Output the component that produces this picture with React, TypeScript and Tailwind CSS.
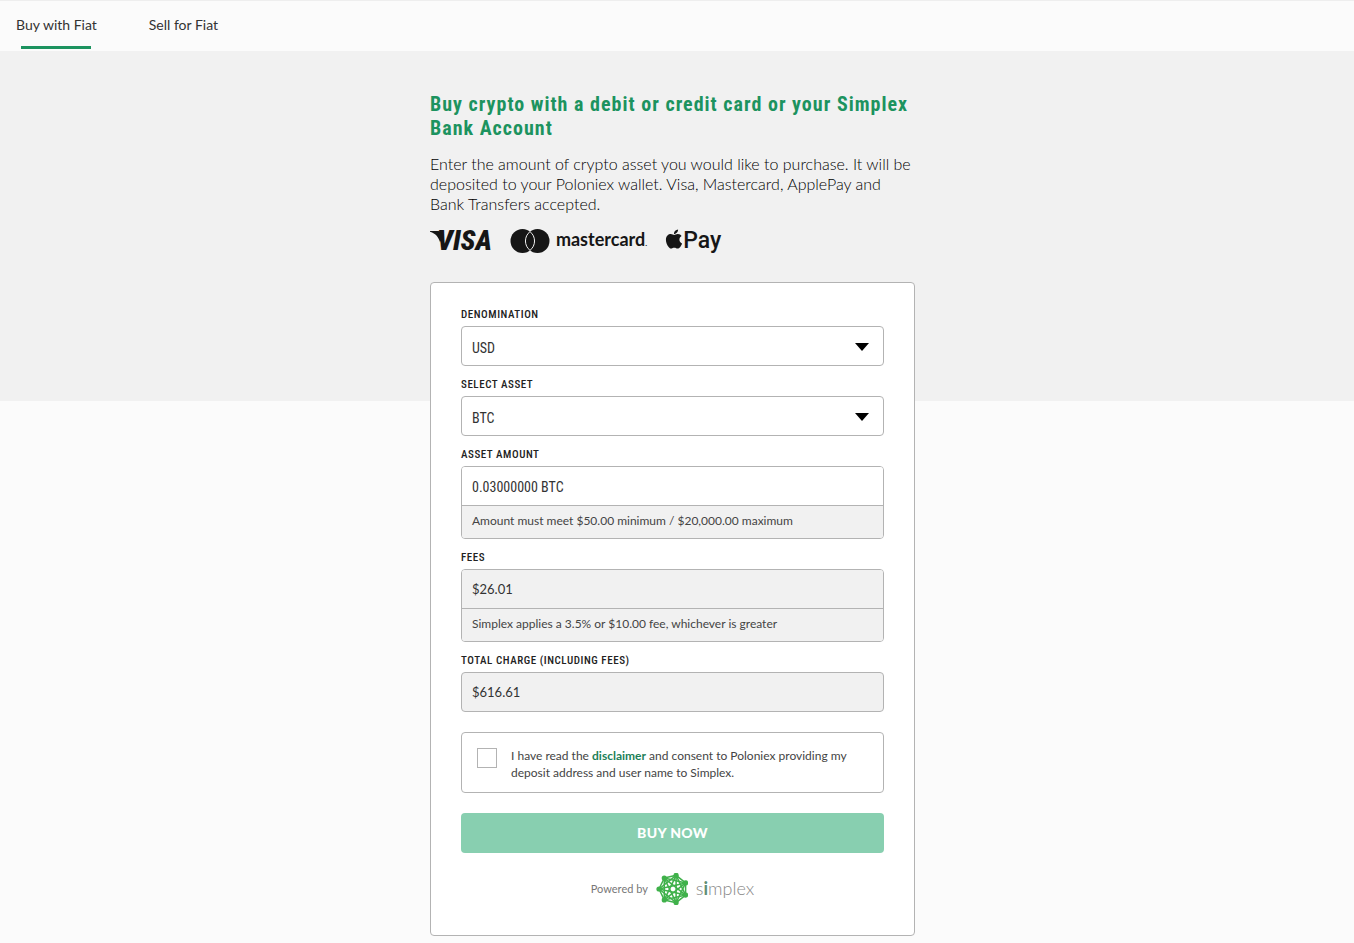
import React, { useState } from 'react';
import { FaApple } from 'react-icons/fa';

const tabs = ['Buy with Fiat', 'Sell for Fiat'];

const labelClass = 'block mt-[11px] mb-[3px] font-["Roboto_Condensed",sans-serif] text-[11px] leading-4 font-medium tracking-wider uppercase text-[#222]';

const VisaLogo = () => (
  <div className='relative pl-[7px] font-["Roboto_Condensed",sans-serif] text-[28px] leading-7 font-black italic'>
    <svg className="absolute left-0 top-1 w-3 h-3" viewBox="0 0 12 12" fill="currentColor">
      <path d="M0 0h8.500c1.500 0 2.300.7 2.600 2L12 8l-2 3C8.500 6.500 6 2.600 0 .8z" />
    </svg>
    VISA
  </div>
);

const MastercardLogo = () => (
  <div className="flex items-center gap-1.5">
    <svg className="w-10 h-6" viewBox="0 0 40 24" fill="currentColor">
      <circle cx="12.500" cy="12" r="12" />
      <circle cx="27.500" cy="12" r="12" />
      <path d="M20 2.600a12 12 0 0 1 0 18.800a12 12 0 0 1 0-18.800z" stroke="#f1f1f1" strokeWidth="1" />
    </svg>
    <span className="font-[Lato,sans-serif] text-lg leading-6 font-bold">
      mastercard<span className="text-[8px]">.</span>
    </span>
  </div>
);

const ApplePayLogo = () => (
  <div className="flex items-center">
    <FaApple className="w-[18px] h-[22px] mb-1" />
    <span className="font-[Roboto,sans-serif] text-[23px] leading-6 font-medium">Pay</span>
  </div>
);

const SimplexMark = () => {
  const nodes = [0, 1, 2, 3, 4, 5, 6].map((i) => {
    const angle = Math.PI + (i * 2 * Math.PI) / 7;
    return { x: 17 + 14 * Math.cos(angle), y: 16 + 14 * Math.sin(angle) };
  });

  return (
    <svg className="w-8 h-8" viewBox="0 0 32 32" fill="#3fb14a" stroke="#3fb14a">
      {nodes.map((a, i) =>
        nodes.slice(i + 1).map((b, j) => (
          <line key={`${i}-${j}`} x1={a.x} y1={a.y} x2={b.x} y2={b.y} strokeWidth="1.500" />
        ))
      )}
      {nodes.map((n, i) => (
        <circle key={i} cx={n.x} cy={n.y} r="2.600" stroke="none" />
      ))}
    </svg>
  );
};

const SelectField = ({ id, label, options }: { id: string; label: string; options: string[] }) => (
  <div>
    <label htmlFor={id} className={labelClass}>{label}</label>
    <div className="relative">
      <select
        id={id}
        className='block w-full h-10 px-2.5 pt-1 appearance-none rounded border border-[#b3b3b3] bg-white font-["Roboto_Condensed",sans-serif] text-sm text-[#333]'
      >
        {options.map((o) => (
          <option key={o}>{o}</option>
        ))}
      </select>
      <svg className="absolute right-[15px] top-[17px] w-3.5 h-2 pointer-events-none" viewBox="0 0 14 8">
        <path d="M0 0h14L7 8z" />
      </svg>
    </div>
  </div>
);

const App = () => {
  const [activeTab, setActiveTab] = useState(0);
  const [amount, setAmount] = useState('0.03000000 BTC');

  return (
    <div className="min-h-screen bg-[#fbfbfb] font-[Lato,sans-serif] text-[#222]">
      <nav className="flex h-[51px] gap-[52px] border-t border-[#eee] px-4">
        {tabs.map((tab, index) => (
          <button
            key={tab}
            onClick={() => setActiveTab(index)}
            className="flex flex-col items-center justify-between pt-3.5 pb-0.5 text-sm text-[#333]"
          >
            {tab}
            <span className={activeTab === index ? 'w-[70px] h-[3px] bg-[#1c935f]' : 'h-[3px]'} />
          </button>
        ))}
      </nav>

      {/* Grey band behind the top of the form */}
      <main className="bg-[linear-gradient(#f1f1f1_350px,transparent_350px)] pt-[41px] pb-[7px] pr-[9px]">
        <div className="w-full max-w-[485px] mx-auto">
          <h1 className='font-["Roboto_Condensed",sans-serif] text-xl leading-6 font-bold tracking-wider text-[#1c935f]'>
            Buy crypto with a debit or credit card or your Simplex Bank Account
          </h1>
          <p className="mt-3.5 text-base leading-5 font-light text-black">
            Enter the amount of crypto asset you would like to purchase. It will be deposited to your Poloniex wallet.
            Visa, Mastercard, ApplePay and Bank Transfers accepted.
          </p>

          <div className="flex items-center gap-[18px] h-7 mt-[13px] text-[#161616]">
            <VisaLogo />
            <MastercardLogo />
            <ApplePayLogo />
          </div>

          {/* Form */}
          <form
            onSubmit={(e) => e.preventDefault()}
            className="mt-[27px] px-[30px] pt-[13px] pb-[30px] flow-root rounded border border-[#b3b3b3] bg-white"
          >
            <SelectField id="denomination" label="Denomination" options={['USD', 'EUR', 'GBP']} />
            <SelectField id="asset" label="Select asset" options={['BTC', 'ETH', 'XRP']} />

            <label htmlFor="amount" className={labelClass}>Asset amount</label>
            <div className="rounded border border-[#b3b3b3] overflow-hidden">
              <input
                id="amount"
                value={amount}
                onChange={(e) => setAmount(e.target.value)}
                className='block w-full h-[38px] px-2.5 pt-0.5 bg-white font-["Roboto_Condensed",sans-serif] text-sm text-[#333]'
              />
              <p className="h-[33px] px-2.5 border-t border-[#b3b3b3] bg-[#f1f1f1] text-xs leading-[30px] text-[#444]">
                Amount must meet $50.00 minimum / $20,000.00 maximum
              </p>
            </div>

            <label htmlFor="fees" className={labelClass}>Fees</label>
            <div className="rounded border border-[#b3b3b3] overflow-hidden">
              <input id="fees" readOnly value="$26.01" className="block w-full h-[38px] px-2.5 bg-[#f1f1f1] text-[13px] text-[#333]" />
              <p className="h-[33px] px-2.5 border-t border-[#b3b3b3] bg-[#f1f1f1] text-xs leading-[30px] text-[#444]">
                Simplex applies a 3.5% or $10.00 fee, whichever is greater
              </p>
            </div>

            <label htmlFor="total" className={labelClass}>Total charge (including fees)</label>
            <input
              id="total"
              readOnly
              value="$616.61"
              className="block w-full h-10 px-2.5 rounded border border-[#b3b3b3] bg-[#f1f1f1] text-[13px] text-[#333]"
            />

            <div className="flex items-start gap-3.5 mt-5 px-[15px] pt-3.5 pb-[11px] rounded border border-[#b3b3b3]">
              <input id="consent" type="checkbox" className="w-5 h-5 mt-px shrink-0 appearance-none border border-[#b3b3b3] bg-white checked:bg-[#1c935f]" />
              <label htmlFor="consent" className="text-xs leading-[17px] text-[#444]">
                I have read the <a href="#disclaimer" className="font-bold text-[#1c7f58]">disclaimer</a>
                <span> and consent to Poloniex providing my </span>
                <span>deposit address and user name to Simplex.</span>
              </label>
            </div>

            <button type="submit" className="block w-full h-10 mt-5 rounded bg-[#88cfb0] text-sm font-black tracking-wide text-white">
              BUY NOW
            </button>

            <div className="flex items-center justify-center gap-2 mt-5 h-8">
              <span className="text-[11px] text-[#777]">Powered by</span>
              <SimplexMark />
              <span className="pb-0.5 text-lg leading-6 font-light text-[#888]">
                s<span className="font-bold text-[#5f8f74]">i</span>mplex
              </span>
            </div>
          </form>
        </div>
      </main>
    </div>
  );
};

export default App;
